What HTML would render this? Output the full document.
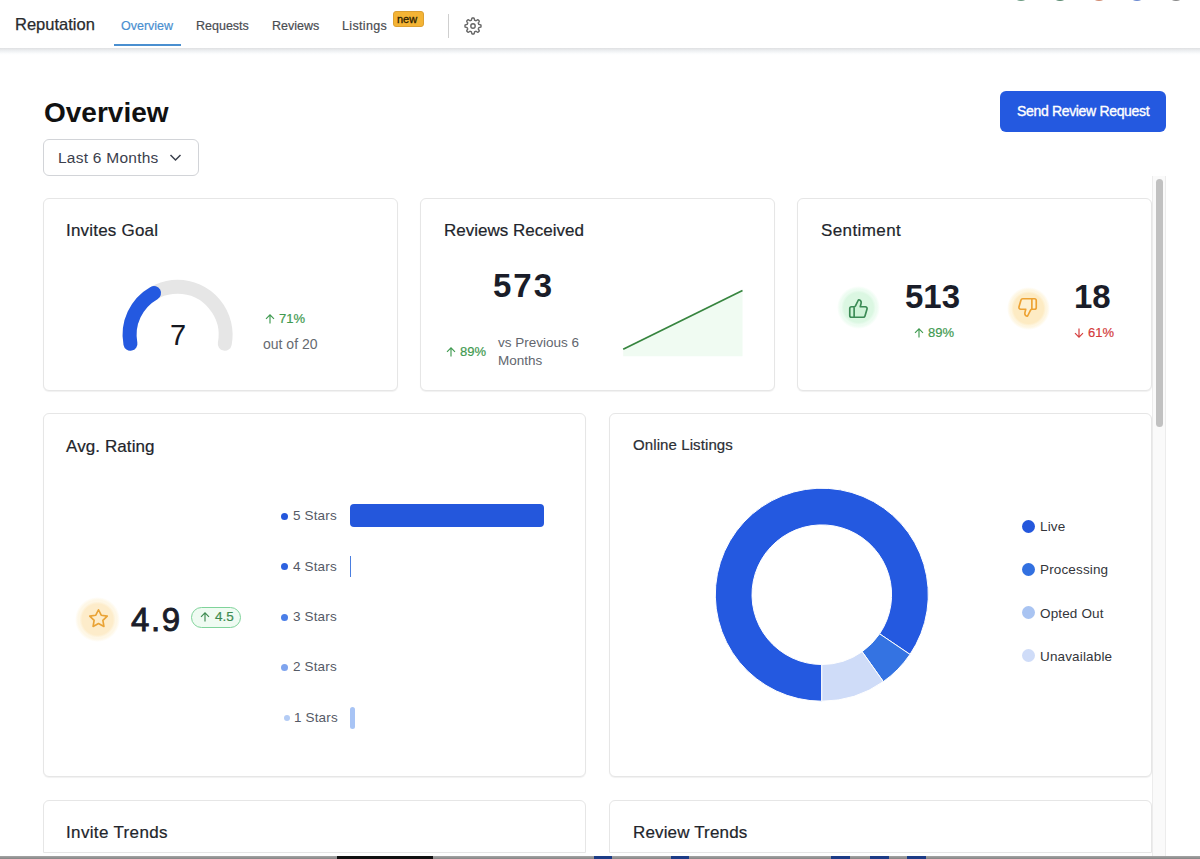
<!DOCTYPE html>
<html><head><meta charset="utf-8">
<style>
*{margin:0;padding:0;box-sizing:border-box}
html,body{width:1200px;height:859px;overflow:hidden;background:#fff;font-family:"Liberation Sans",sans-serif;position:relative}
.abs{position:absolute}
.t{position:absolute;white-space:nowrap;line-height:1}
#hdr{position:absolute;left:0;top:0;width:1200px;height:48px;background:#fff}
#shadow{position:absolute;left:0;top:48px;width:1200px;height:7px;background:linear-gradient(#dfe0e2,#eef0f2 40%,#fbfcfd 80%,#fff)}
.card{position:absolute;background:#fff;border:1px solid #e6e6e6;border-radius:6px;box-shadow:0 1px 1px rgba(0,0,0,.06)}
.ttl{position:absolute;white-space:nowrap;line-height:1;color:#22252b;font-size:17px;-webkit-text-stroke:.2px #22252b}
.pct{-webkit-text-stroke:.2px currentColor}
</style></head><body>

<div id="hdr">
  <div class="t" style="left:15px;top:16px;font-size:16.5px;color:#2a2b2e;-webkit-text-stroke:.25px #2a2b2e">Reputation</div>
  <div class="t" style="left:121px;top:20px;font-size:12.5px;color:#4a8fd0;-webkit-text-stroke:.2px #4a8fd0">Overview</div>
  <div class="abs" style="left:114px;top:44px;width:67px;height:2px;background:#4a8fd0"></div>
  <div class="t" style="left:196px;top:20px;font-size:12.5px;color:#4a4d52;-webkit-text-stroke:.2px #4a4d52">Requests</div>
  <div class="t" style="left:272px;top:20px;font-size:12.5px;color:#4a4d52;-webkit-text-stroke:.2px #4a4d52">Reviews</div>
  <div class="t" style="left:342px;top:20px;font-size:12.5px;letter-spacing:.35px;color:#4a4d52;-webkit-text-stroke:.2px #4a4d52">Listings</div>
  <div class="abs" style="left:392.5px;top:11px;width:31px;height:15.5px;background:#f4b435;border-radius:3px;border:1px solid #dca032"></div>
  <div class="t" style="left:397px;top:13.5px;font-size:11px;color:#2e2200;-webkit-text-stroke:.3px #2e2200">new</div>
  <div class="abs" style="left:448px;top:14px;width:1px;height:24px;background:#cfcfcf"></div>
  <svg class="abs" style="left:463px;top:16px" width="20" height="20" viewBox="-10 -10 20 20"><path d="M0.00,-8.00L0.21,-8.00L0.42,-7.99L0.63,-7.98L0.84,-7.96L1.03,-7.83L1.18,-7.46L1.31,-7.07L1.42,-6.66L1.50,-6.27L1.58,-5.89L1.70,-5.75L1.85,-5.71L2.00,-5.66L2.15,-5.60L2.30,-5.54L2.44,-5.48L2.58,-5.42L2.72,-5.35L2.86,-5.27L3.05,-5.28L3.37,-5.49L3.71,-5.71L4.07,-5.92L4.44,-6.11L4.81,-6.27L5.03,-6.22L5.20,-6.08L5.35,-5.95L5.51,-5.80L5.66,-5.66L5.80,-5.51L5.95,-5.35L6.08,-5.20L6.22,-5.03L6.27,-4.81L6.11,-4.44L5.92,-4.07L5.71,-3.71L5.49,-3.37L5.28,-3.05L5.27,-2.86L5.35,-2.72L5.42,-2.58L5.48,-2.44L5.54,-2.30L5.60,-2.15L5.66,-2.00L5.71,-1.85L5.75,-1.70L5.89,-1.58L6.27,-1.50L6.66,-1.42L7.07,-1.31L7.46,-1.18L7.83,-1.03L7.96,-0.84L7.98,-0.63L7.99,-0.42L8.00,-0.21L8.00,-0.00L8.00,0.21L7.99,0.42L7.98,0.63L7.96,0.84L7.83,1.03L7.46,1.18L7.07,1.31L6.66,1.42L6.27,1.50L5.89,1.58L5.75,1.70L5.71,1.85L5.66,2.00L5.60,2.15L5.54,2.30L5.48,2.44L5.42,2.58L5.35,2.72L5.27,2.86L5.28,3.05L5.49,3.37L5.71,3.71L5.92,4.07L6.11,4.44L6.27,4.81L6.22,5.03L6.08,5.20L5.95,5.35L5.80,5.51L5.66,5.66L5.51,5.80L5.35,5.95L5.20,6.08L5.03,6.22L4.81,6.27L4.44,6.11L4.07,5.92L3.71,5.71L3.37,5.49L3.05,5.28L2.86,5.27L2.72,5.35L2.58,5.42L2.44,5.48L2.30,5.54L2.15,5.60L2.00,5.66L1.85,5.71L1.70,5.75L1.58,5.89L1.50,6.27L1.42,6.66L1.31,7.07L1.18,7.46L1.03,7.83L0.84,7.96L0.63,7.98L0.42,7.99L0.21,8.00L0.00,8.00L-0.21,8.00L-0.42,7.99L-0.63,7.98L-0.84,7.96L-1.03,7.83L-1.18,7.46L-1.31,7.07L-1.42,6.66L-1.50,6.27L-1.58,5.89L-1.70,5.75L-1.85,5.71L-2.00,5.66L-2.15,5.60L-2.30,5.54L-2.44,5.48L-2.58,5.42L-2.72,5.35L-2.86,5.27L-3.05,5.28L-3.37,5.49L-3.71,5.71L-4.07,5.92L-4.44,6.11L-4.81,6.27L-5.03,6.22L-5.20,6.08L-5.35,5.95L-5.51,5.80L-5.66,5.66L-5.80,5.51L-5.95,5.35L-6.08,5.20L-6.22,5.03L-6.27,4.81L-6.11,4.44L-5.92,4.07L-5.71,3.71L-5.49,3.37L-5.28,3.05L-5.27,2.86L-5.35,2.72L-5.42,2.58L-5.48,2.44L-5.54,2.30L-5.60,2.15L-5.66,2.00L-5.71,1.85L-5.75,1.70L-5.89,1.58L-6.27,1.50L-6.66,1.42L-7.07,1.31L-7.46,1.18L-7.83,1.03L-7.96,0.84L-7.98,0.63L-7.99,0.42L-8.00,0.21L-8.00,0.00L-8.00,-0.21L-7.99,-0.42L-7.98,-0.63L-7.96,-0.84L-7.83,-1.03L-7.46,-1.18L-7.07,-1.31L-6.66,-1.42L-6.27,-1.50L-5.89,-1.58L-5.75,-1.70L-5.71,-1.85L-5.66,-2.00L-5.60,-2.15L-5.54,-2.30L-5.48,-2.44L-5.42,-2.58L-5.35,-2.72L-5.27,-2.86L-5.28,-3.05L-5.49,-3.37L-5.71,-3.71L-5.92,-4.07L-6.11,-4.44L-6.27,-4.81L-6.22,-5.03L-6.08,-5.20L-5.95,-5.35L-5.80,-5.51L-5.66,-5.66L-5.51,-5.80L-5.35,-5.95L-5.20,-6.08L-5.03,-6.22L-4.81,-6.27L-4.44,-6.11L-4.07,-5.92L-3.71,-5.71L-3.37,-5.49L-3.05,-5.28L-2.86,-5.27L-2.72,-5.35L-2.58,-5.42L-2.44,-5.48L-2.30,-5.54L-2.15,-5.60L-2.00,-5.66L-1.85,-5.71L-1.70,-5.75L-1.58,-5.89L-1.50,-6.27L-1.42,-6.66L-1.31,-7.07L-1.18,-7.46L-1.03,-7.83L-0.84,-7.96L-0.63,-7.98L-0.42,-7.99L-0.21,-8.00L-0.00,-8.00Z" fill="none" stroke="#666" stroke-width="1.4" stroke-linejoin="round"/><circle r="2.2" fill="none" stroke="#666" stroke-width="1.4"/></svg>
</div>
<div id="shadow"></div>

<div class="t" style="left:44px;top:99px;font-size:28px;font-weight:700;color:#111">Overview</div>
<div class="abs" style="left:43px;top:139px;width:156px;height:37px;border:1px solid #d2d4d8;border-radius:6px"></div>
<div class="t" style="left:58px;top:150px;font-size:15.5px;letter-spacing:.25px;color:#3b404d">Last 6 Months</div>
<svg class="abs" style="left:169px;top:153px" width="13" height="9" viewBox="0 0 13 9"><path d="M1.5 2 6.5 7 11.5 2" fill="none" stroke="#3b404d" stroke-width="1.5"/></svg>

<div class="abs" style="left:1000px;top:91px;width:166px;height:41px;background:#2459e0;border-radius:6px"></div>
<div class="t" style="left:1017px;top:104px;font-size:14px;letter-spacing:-.33px;color:#fff;-webkit-text-stroke:.35px #fff">Send Review Request</div>

<!-- scrollbar -->
<div class="abs" style="left:1152px;top:176px;width:14px;height:680px;background:#fafafa;border-left:1px solid #ececec;border-right:1px solid #ececec"></div>
<div class="abs" style="left:1156px;top:179px;width:7px;height:248px;background:#c1c1c1;border-radius:4px"></div>

<!-- row 1 -->
<div class="card" style="left:43px;top:198px;width:355px;height:193px">
  <div class="ttl" style="left:22px;top:23px;letter-spacing:.2px">Invites Goal</div>
</div>
<svg class="abs" style="left:0;top:0" width="400" height="400">
  <path d="M130.42,343.68A48,48 0 1,1 224.78,343.68" fill="none" stroke="#e6e6e6" stroke-width="14" stroke-linecap="round"/>
  <path d="M130.42,343.68A48,48 0 0,1 154.04,293.03" fill="none" stroke="#2459e0" stroke-width="14" stroke-linecap="round"/>
</svg>
<div class="t" style="left:170px;top:320.5px;font-size:29px;color:#15171f">7</div>
<div class="abs" style="left:265px;top:314px"><svg width="10" height="10" viewBox="0 0 10 10" style="position:absolute"><path d="M5 9.6V1M1 4.8 5 .9 9 4.8" fill="none" stroke="#3f9a50" stroke-width="1.15"/></svg></div>
<div class="t pct" style="left:279px;top:312px;font-size:13px;color:#3f9a50">71%</div>
<div class="t" style="left:263px;top:337px;font-size:14px;color:#666a70">out of 20</div>

<div class="card" style="left:420px;top:198px;width:355px;height:193px">
  <div class="ttl" style="left:23px;top:23px">Reviews Received</div>
</div>
<div class="t" style="left:493px;top:269px;font-size:33px;letter-spacing:2px;font-weight:700;color:#1a1d29">573</div>
<div class="abs" style="left:446px;top:347px"><svg width="10" height="10" viewBox="0 0 10 10" style="position:absolute"><path d="M5 9.6V1M1 4.8 5 .9 9 4.8" fill="none" stroke="#3f9a50" stroke-width="1.15"/></svg></div>
<div class="t pct" style="left:460px;top:345px;font-size:13px;color:#3f9a50">89%</div>
<div class="t" style="left:498px;top:334px;font-size:13.5px;color:#62666e;line-height:18px">vs Previous 6<br>Months</div>
<svg class="abs" style="left:0;top:0" width="800" height="400">
  <path d="M623.2,349.2L742.5,290.5V356.2H623.2Z" fill="#f0fbf2"/>
  <path d="M623.2,349.2L742.5,290.5" stroke="#37853f" stroke-width="1.8"/>
</svg>

<div class="card" style="left:797px;top:198px;width:355px;height:193px">
  <div class="ttl" style="left:23px;top:23px;letter-spacing:.4px">Sentiment</div>
</div>
<div class="abs" style="left:837.0px;top:286.1px;width:43.0px;height:43.0px;border-radius:50%;background:radial-gradient(circle closest-side,#dbf7e2 0,#dbf7e2 14.8px,#edfcf1 17.3px,#edfcf1 18.5px,rgba(255,255,255,0) 21.5px)"></div>
<svg class="abs" style="left:847.5px;top:297.5px" width="21" height="21" viewBox="0 0 24 24"><path d="M7 10v12M15 5.88 14 10h5.83a2 2 0 0 1 1.92 2.56l-2.33 8A2 2 0 0 1 17.5 22H4a2 2 0 0 1-2-2v-8a2 2 0 0 1 2-2h2.76a2 2 0 0 0 1.79-1.11L12 2a3.13 3.13 0 0 1 3 3.88Z" fill="#cff3d8" stroke="#3b8a55" stroke-width="1.9" stroke-linejoin="round"/></svg>
<div class="t" style="left:905px;top:279.5px;font-size:33px;font-weight:700;color:#1a1d29">513</div>
<div class="abs" style="left:914px;top:328px"><svg width="10" height="10" viewBox="0 0 10 10" style="position:absolute"><path d="M5 9.6V1M1 4.8 5 .9 9 4.8" fill="none" stroke="#3f9a50" stroke-width="1.15"/></svg></div>
<div class="t pct" style="left:928px;top:326px;font-size:13px;color:#3f9a50">89%</div>

<div class="abs" style="left:1006.5px;top:286.5px;width:43.0px;height:43.0px;border-radius:50%;background:radial-gradient(circle closest-side,#fdebc3 0,#fdebc3 15px,#fef6e1 17.5px,#fef6e1 18.5px,rgba(255,255,255,0) 21.5px)"></div>
<svg class="abs" style="left:1016.5px;top:297px" width="21" height="21" viewBox="0 0 24 24"><path d="M17 14V2M9 18.12 10 14H4.17a2 2 0 0 1-1.92-2.56l2.33-8A2 2 0 0 1 6.5 2H20a2 2 0 0 1 2 2v8a2 2 0 0 1-2 2h-2.76a2 2 0 0 0-1.79 1.11L12 22a3.13 3.13 0 0 1-3-3.88Z" fill="#fdf0d0" stroke="#eda232" stroke-width="1.9" stroke-linejoin="round"/></svg>
<div class="t" style="left:1074px;top:279.5px;font-size:33px;font-weight:700;color:#1a1d29">18</div>
<div class="abs" style="left:1074px;top:328px;transform:rotate(180deg);width:10px;height:10px"><svg width="10" height="10" viewBox="0 0 10 10" style="position:absolute"><path d="M5 9.6V1M1 4.8 5 .9 9 4.8" fill="none" stroke="#d43c3c" stroke-width="1.15"/></svg></div>
<div class="t pct" style="left:1088px;top:326px;font-size:13px;color:#d43c3c">61%</div>

<!-- row 2 -->
<div class="card" style="left:43px;top:413px;width:543px;height:364px">
  <div class="ttl" style="left:22px;top:24px;letter-spacing:.1px">Avg. Rating</div>
</div>
<div class="abs" style="left:75.3px;top:596.5px;width:45.0px;height:45.0px;border-radius:50%;background:radial-gradient(circle closest-side,#fdecca 0,#fdecca 15.5px,#fef7e6 18.0px,#fef7e6 19.5px,rgba(255,255,255,0) 22.5px)"></div>
<svg class="abs" style="left:87.5px;top:608px" width="21" height="21" viewBox="0 0 24 24"><path d="M12 2 15.09 8.26 22 9.27 17 14.14 18.18 21.02 12 17.77 5.82 21.02 7 14.14 2 9.27 8.91 8.26Z" fill="none" stroke="#e9a336" stroke-width="1.9" stroke-linejoin="round"/></svg>
<div class="t" style="left:131px;top:603px;font-size:33px;letter-spacing:1.6px;color:#1a1d29;-webkit-text-stroke:.9px #1a1d29">4.9</div>
<div class="abs" style="left:191px;top:607px;width:50px;height:21px;border-radius:11px;border:1px solid #7fd39a;background:#effbf2"></div>
<div class="abs" style="left:200px;top:612px"><svg width="10" height="10" viewBox="0 0 10 10" style="position:absolute"><path d="M5 9.6V1M1 4.8 5 .9 9 4.8" fill="none" stroke="#3d8b50" stroke-width="1.15"/></svg></div>
<div class="t pct" style="left:215px;top:610px;font-size:13.5px;color:#3d8b50">4.5</div>
<div class="abs" style="left:281.0px;top:512.5px;width:7px;height:7px;border-radius:50%;background:#2457dc"></div><div class="t" style="left:293px;top:509px;font-size:13.5px;letter-spacing:.15px;color:#555a66">5 Stars</div><div class="abs" style="left:281.0px;top:563.0px;width:7px;height:7px;border-radius:50%;background:#2d62e0"></div><div class="t" style="left:293px;top:559.5px;font-size:13.5px;letter-spacing:.15px;color:#555a66">4 Stars</div><div class="abs" style="left:281.0px;top:613.5px;width:7px;height:7px;border-radius:50%;background:#4a7ee8"></div><div class="t" style="left:293px;top:610px;font-size:13.5px;letter-spacing:.15px;color:#555a66">3 Stars</div><div class="abs" style="left:281.0px;top:663.5px;width:7px;height:7px;border-radius:50%;background:#7fa4ee"></div><div class="t" style="left:293px;top:660px;font-size:13.5px;letter-spacing:.15px;color:#555a66">2 Stars</div><div class="abs" style="left:283.5px;top:715.0px;width:6px;height:6px;border-radius:50%;background:#b4ccf5"></div><div class="t" style="left:294px;top:711px;font-size:13.5px;letter-spacing:.15px;color:#555a66">1 Stars</div><div class="abs" style="left:350px;top:504px;width:194px;height:23px;border-radius:4px;background:#2457dc"></div><div class="abs" style="left:349.5px;top:556px;width:1.5px;height:21px;background:#4a7ee0"></div><div class="abs" style="left:350px;top:707px;width:5px;height:22px;border-radius:3px;background:#a8c4f5"></div>
<div class="card" style="left:609px;top:413px;width:543px;height:364px">
  <div class="ttl" style="left:23px;top:22.5px;font-size:15px;letter-spacing:.1px;color:#2e3036">Online Listings</div>
</div>
<svg class="abs" style="left:609px;top:413px" width="543" height="364"><path d="M212.80,288.20A106.5,106.5 0 1,1 300.99,241.41L270.60,220.83A69.8,69.8 0 1,0 212.80,251.50Z" fill="#2459e0" stroke="#fff" stroke-width="1"/><path d="M300.99,241.41A106.5,106.5 0 0,1 274.34,268.62L253.13,238.67A69.8,69.8 0 0,0 270.60,220.83Z" fill="#3473e2" stroke="#fff" stroke-width="1"/><path d="M274.34,268.62A106.5,106.5 0 0,1 212.80,288.20L212.80,251.50A69.8,69.8 0 0,0 253.13,238.67Z" fill="#cfdcf8" stroke="#fff" stroke-width="1"/></svg>
<div class="abs" style="left:1022px;top:519.7px;width:13px;height:13px;border-radius:50%;background:#2457dc"></div><div class="t" style="left:1040px;top:520.2px;font-size:13.5px;letter-spacing:.15px;color:#33353a">Live</div><div class="abs" style="left:1022px;top:562.9px;width:13px;height:13px;border-radius:50%;background:#3270e0"></div><div class="t" style="left:1040px;top:563.4px;font-size:13.5px;letter-spacing:.15px;color:#33353a">Processing</div><div class="abs" style="left:1022px;top:606.0px;width:13px;height:13px;border-radius:50%;background:#a9c4f2"></div><div class="t" style="left:1040px;top:606.5px;font-size:13.5px;letter-spacing:.15px;color:#33353a">Opted Out</div><div class="abs" style="left:1022px;top:649.4px;width:13px;height:13px;border-radius:50%;background:#cfdcf8"></div><div class="t" style="left:1040px;top:649.9px;font-size:13.5px;letter-spacing:.15px;color:#33353a">Unavailable</div>
<!-- row 3 -->
<div class="card" style="left:43px;top:800px;width:543px;height:53px;border-radius:6px 6px 0 0;box-shadow:none">
  <div class="ttl" style="left:22px;top:23px;letter-spacing:.35px">Invite Trends</div>
</div>
<div class="card" style="left:609px;top:800px;width:543px;height:53px;border-radius:6px 6px 0 0;box-shadow:none">
  <div class="ttl" style="left:23px;top:23px;letter-spacing:.15px">Review Trends</div>
</div>
<div class="abs" style="left:0;top:856px;width:1200px;height:3px;background:linear-gradient(#a4a4a4,#868686)"></div>
<div class="abs" style="left:337px;top:856px;width:96px;height:3px;background:#111"></div>
<div class="abs" style="left:594px;top:856px;width:18px;height:3px;background:#1d3c86"></div><div class="abs" style="left:671px;top:856px;width:18px;height:3px;background:#1d3c86"></div><div class="abs" style="left:831px;top:856px;width:19px;height:3px;background:#1d3c86"></div><div class="abs" style="left:870px;top:856px;width:19px;height:3px;background:#1d3c86"></div><div class="abs" style="left:907px;top:856px;width:19px;height:3px;background:#1d3c86"></div><div class="abs" style="left:1011.7px;top:-16.8px;width:18px;height:18px;border-radius:50%;background:#6a9a80"></div><div class="abs" style="left:1050.5px;top:-16.8px;width:18px;height:18px;border-radius:50%;background:#5a8a70"></div><div class="abs" style="left:1090.15px;top:-16.8px;width:18px;height:18px;border-radius:50%;background:#d08a70"></div><div class="abs" style="left:1128.25px;top:-16.8px;width:18px;height:18px;border-radius:50%;background:#6a88d0"></div><div class="abs" style="left:1166.9px;top:-16.8px;width:18px;height:18px;border-radius:50%;background:#888"></div>
</body></html>
